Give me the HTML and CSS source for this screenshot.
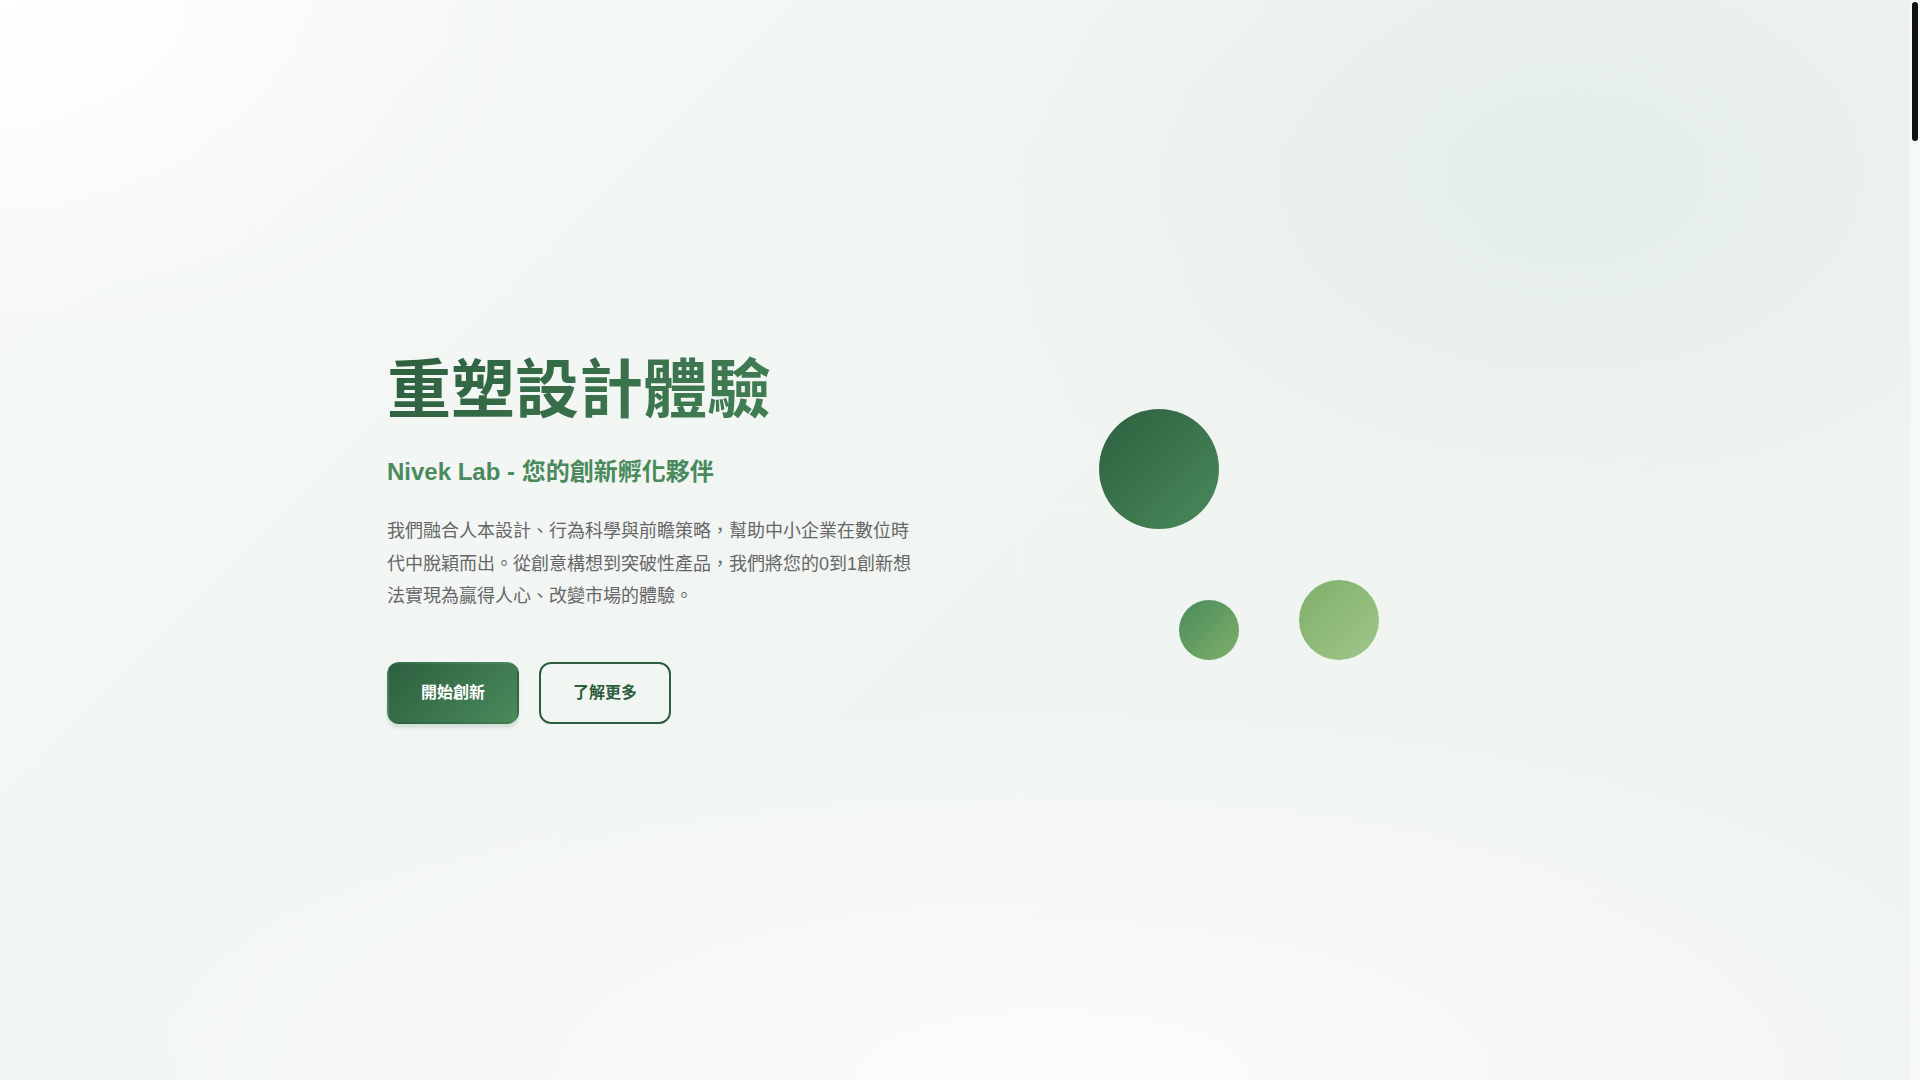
FILE: index.html
```html
<!DOCTYPE html>
<html lang="zh-Hant">
<head>
<meta charset="UTF-8">
<title>Nivek Lab - 重塑設計體驗</title>
<link rel="stylesheet" href="styles.css">
</head>
<body>
<main class="page">
  <section class="hero">
    <div class="container hero-grid">
      <div class="hero-text">
        <h1 class="hero-title">重塑設計體驗</h1>
        <p class="hero-subtitle">Nivek Lab - 您的創新孵化夥伴</p>
        <p class="hero-desc">我們融合人本設計、行為科學與前瞻策略，幫助中小企業在數位時代中脫穎而出。從創意構想到突破性產品，我們將您的0到1創新想法實現為贏得人心、改變市場的體驗。</p>
        <div class="hero-actions">
          <a class="btn btn-primary" href="#contact">開始創新</a>
          <a class="btn btn-outline" href="#about">了解更多</a>
        </div>
      </div>
      <div class="hero-visual">
        <span class="shape shape-1"></span>
        <span class="shape shape-2"></span>
        <span class="shape shape-3"></span>
      </div>
    </div>
  </section>
</main>
<div class="scrollbar" aria-hidden="true"><span class="scrollbar-thumb"></span></div>
</body>
</html>
```
FILE: styles.css
```css
* { box-sizing: border-box; }
html, body { margin: 0; padding: 0; }
body {
  font-family: "Liberation Sans", "Noto Sans CJK TC", sans-serif;
  color: #333;
  background: #f4f7f5;
  overflow: hidden;
}
.page {
  margin-right: 10px;
}
.scrollbar {
  position: fixed;
  top: 0;
  right: 0;
  width: 10px;
  height: 100vh;
  background: #f7f9f8;
}
.scrollbar-thumb {
  position: absolute;
  top: 2px;
  left: 2px;
  width: 6px;
  height: 139px;
  border-radius: 3px;
  background: #111;
}
.hero {
  min-height: 100vh;
  display: flex;
  align-items: center;
  padding-bottom: 4px;
  background:
    radial-gradient(ellipse 32% 38% at 82% 16%, rgba(226, 236, 230, 0.85), rgba(226, 236, 230, 0) 100%),
    radial-gradient(ellipse 28% 32% at 0% 0%, rgba(255, 255, 255, 1), rgba(255, 255, 255, 0) 100%),
    radial-gradient(ellipse 55% 35% at 55% 100%, rgba(251, 252, 251, 1), rgba(251, 252, 251, 0) 100%),
    linear-gradient(135deg, #f6f9f7 0%, #f1f5f2 50%, #f0f4f1 100%);
}
.container {
  width: 100%;
  max-width: 1200px;
  margin: 0 auto;
  padding: 0 2rem;
}
.hero-grid {
  display: grid;
  grid-template-columns: 1fr 1fr;
  gap: 4rem;
  align-items: center;
}
.hero-title {
  margin: 0 0 26px;
  font-size: 64px;
  line-height: 1.2;
  font-weight: 700;
  background: linear-gradient(135deg, #2d5f3f 0%, #4a8a5c 100%);
  -webkit-background-clip: text;
  background-clip: text;
  color: transparent;
}
.hero-subtitle {
  margin: 0 0 25px;
  font-size: 24px;
  line-height: 36px;
  font-weight: 700;
  color: #4a8a5c;
}
.hero-desc {
  margin: 0 0 50px;
  font-size: 18px;
  line-height: 1.8;
  color: #666;
}
.hero-actions {
  display: flex;
  gap: 20px;
}
.btn {
  display: inline-block;
  padding: 15px 32px;
  border: 2px solid transparent;
  border-radius: 12px;
  font-size: 16px;
  line-height: 28px;
  font-weight: 700;
  text-decoration: none;
}
.btn-primary {
  color: #fff;
  background: linear-gradient(135deg, #2d5f3f 0%, #4a8a5c 100%);
  box-shadow: 0 4px 3px rgba(45, 95, 63, 0.14);
}
.btn-outline {
  color: #2d5f3f;
  border-color: #2d5f3f;
  background: transparent;
}
.hero-visual {
  position: relative;
  height: 400px;
}
.shape {
  position: absolute;
  border-radius: 50%;
}
.shape-1 {
  width: 120px; height: 120px;
  top: 71px; left: 112px;
  background: linear-gradient(135deg, #2d5f3f 0%, #4a8a5c 100%);
}
.shape-2 {
  width: 60px; height: 60px;
  top: 262px; left: 192px;
  background: linear-gradient(135deg, #4a8a5c 0%, #7fb069 100%);
}
.shape-3 {
  width: 80px; height: 80px;
  top: 242px; left: 312px;
  background: linear-gradient(135deg, #7fb069 0%, #a0c68a 100%);
}
```
